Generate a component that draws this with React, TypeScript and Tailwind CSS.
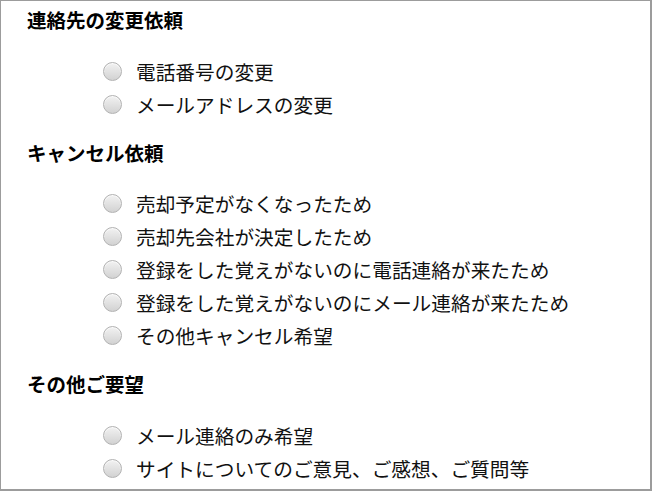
import React from "react";

const sections: { title: string; items: string[] }[] = [
  { title: "連絡先の変更依頼", items: ["電話番号の変更", "メールアドレスの変更"] },
  {
    title: "キャンセル依頼",
    items: [
      "売却予定がなくなったため",
      "売却先会社が決定したため",
      "登録をした覚えがないのに電話連絡が来たため",
      "登録をした覚えがないのにメール連絡が来たため",
      "その他キャンセル希望",
    ],
  },
  { title: "その他ご要望", items: ["メール連絡のみ希望", "サイトについてのご意見、ご感想、ご質問等"] },
];

function Radio() {
  return (
    <span className="block w-[19px] h-[19px] shrink-0 rounded-full border border-[#b2b2b2] bg-gradient-to-b from-[#f2f2f2] to-[#d2d2d2] shadow-[inset_0_1px_1px_rgba(255,255,255,0.8)]" />
  );
}

export default function App() {
  return (
    <div
      className="w-[652px] h-[491px] overflow-hidden bg-white border-l border-t border-r-2 border-b-2 border-[#9c9c9c] pl-[26px] pt-[5px] text-[#111]"
      style={{ fontFamily: '"Noto Sans CJK JP", "Noto Sans", sans-serif' }}
    >
      {sections.map((s, i) => (
        <section key={s.title} className={i > 0 ? "mt-[18px]" : ""}>
          <h2 className="text-[19.5px] leading-[28px] font-bold text-black">{s.title}</h2>
          <ul className="mt-[20.5px] pl-[76px]">
            {s.items.map((it) => (
              <li key={it} className="flex items-center h-[33px] gap-[14px]">
                <Radio />
                <span className="text-[19.7px] leading-[33px] font-normal whitespace-nowrap">{it}</span>
              </li>
            ))}
          </ul>
        </section>
      ))}
    </div>
  );
}
